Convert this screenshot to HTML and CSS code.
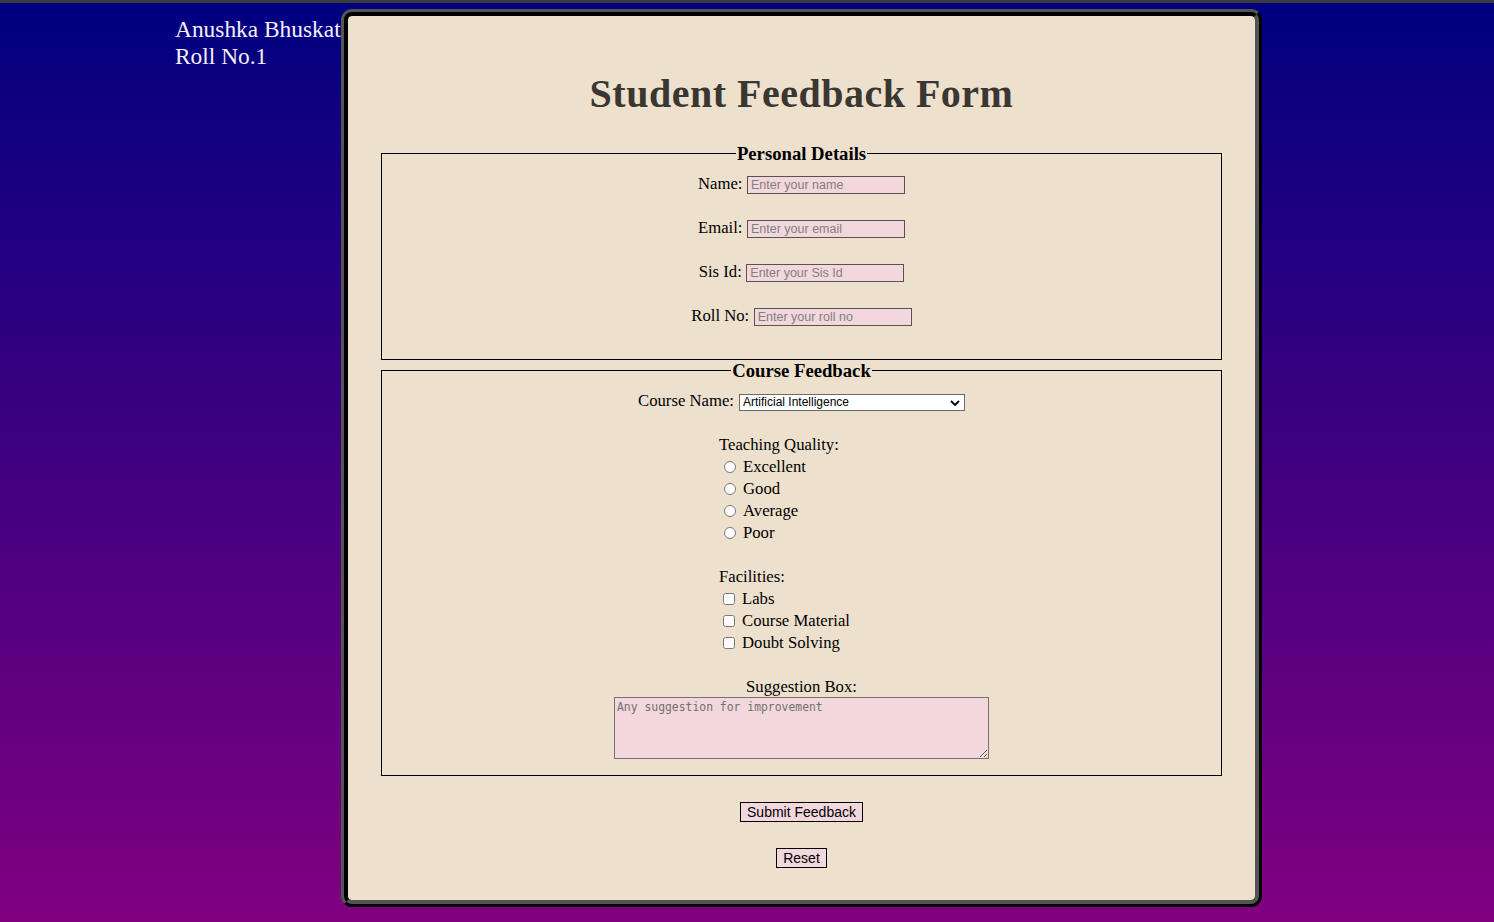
FILE: index.html
```html
<!DOCTYPE html>
<html lang="en">
<head>
<meta charset="utf-8">
<title>Student Feedback Form</title>
<link rel="stylesheet" href="styles.css">
</head>
<body>
<div class="page">
  <div class="student">Anushka Bhuskat<br>Roll No.1</div>
  <main class="card">
    <h1 class="title">Student Feedback Form</h1>
    <form class="form">
      <fieldset class="section">
        <legend class="legend">Personal Details</legend>
        <div class="row"><label class="label" for="name">Name:</label><input class="field" id="name" type="text" placeholder="Enter your name"></div>
        <div class="row"><label class="label" for="email">Email:</label><input class="field" id="email" type="email" placeholder="Enter your email"></div>
        <div class="row"><label class="label" for="sis">Sis Id:</label><input class="field" id="sis" type="text" placeholder="Enter your Sis Id"></div>
        <div class="row"><label class="label" for="roll">Roll No:</label><input class="field" id="roll" type="text" placeholder="Enter your roll no"></div>
      </fieldset>
      <fieldset class="section">
        <legend class="legend">Course Feedback</legend>
        <div class="row row-select"><label class="label" for="course">Course Name:</label><span class="select-wrap"><select class="select" id="course"><option>Artificial Intelligence</option><option>Machine Learning</option><option>Data Structures</option></select><svg class="chevron" width="10" height="6" viewBox="0 0 10 6" aria-hidden="true"><path d="M1 1 L5 5 L9 1" fill="none" stroke="#000" stroke-width="1.8"/></svg></span></div>
        <div class="group">
          <div class="group-title">Teaching Quality:</div>
          <div class="option"><input class="radio" type="radio" name="quality" id="q1"><label for="q1">Excellent</label></div>
          <div class="option"><input class="radio" type="radio" name="quality" id="q2"><label for="q2">Good</label></div>
          <div class="option"><input class="radio" type="radio" name="quality" id="q3"><label for="q3">Average</label></div>
          <div class="option"><input class="radio" type="radio" name="quality" id="q4"><label for="q4">Poor</label></div>
        </div>
        <div class="group">
          <div class="group-title">Facilities:</div>
          <div class="option"><input class="check" type="checkbox" id="f1"><label for="f1">Labs</label></div>
          <div class="option"><input class="check" type="checkbox" id="f2"><label for="f2">Course Material</label></div>
          <div class="option"><input class="check" type="checkbox" id="f3"><label for="f3">Doubt Solving</label></div>
        </div>
        <div class="suggest-label"><label for="sug">Suggestion Box:</label></div>
        <textarea class="suggest" id="sug" placeholder="Any suggestion for improvement"></textarea>
      </fieldset>
      <div class="actions">
        <button class="btn" type="submit">Submit Feedback</button>
        <button class="btn" type="reset">Reset</button>
      </div>
    </form>
  </main>
</div>
</body>
</html>
```

FILE: styles.css
```css
html {
  box-sizing: border-box;
  height: 100%;
  border-top: 3px solid #3c3c3c;
  background: linear-gradient(#000080, #800080);
}
*, *::before, *::after { box-sizing: inherit; }
body {
  margin: 0;
  font-family: "Liberation Serif", "Times New Roman", serif;
  color: #000;
}
.page {
  display: flex;
  align-items: flex-start;
  padding: 6px 0 0 175px;
}
.student {
  flex: 0 0 166px;
  margin-top: 7px;
  font-size: 23.4px;
  line-height: 26.5px;
  color: #f4f0ff;
  white-space: nowrap;
}
.card {
  flex: 0 0 921px;
  width: 921px;
  border: 7px ridge #000;
  border-radius: 11px;
  background: #ede1cd;
  padding: 26px 31px 32px;
}
.title {
  margin: 28px 0 26px;
  text-align: center;
  font-family: "Liberation Serif", Georgia, serif;
  font-weight: bold;
  font-size: 40px;
  letter-spacing: 0.5px;
  color: #3a3631;
}
.form { margin: 0; }
.section {
  margin: 0 2px;
  border: 1px solid #000;
  padding: 9px 12px 10px;
  text-align: center;
  font-size: 16.7px;
  line-height: 22px;
}
.legend {
  font-weight: bold;
  font-size: 18.7px;
  line-height: 21px;
  padding: 0 1px;
}
.row {
  display: flex;
  justify-content: center;
  align-items: center;
  gap: 4.5px;
  height: 22px;
  margin-bottom: 22px;
}
.row-select { gap: 5px; }
.label { line-height: 22px; }
.field {
  width: 158px;
  height: 18px;
  margin: 1px 0 0;
  border: 1px solid #5a5252;
  background: #f2d7dc;
  padding: 1px 3px;
  font-family: "Liberation Sans", Arial, sans-serif;
  font-size: 12.5px;
}
.field::placeholder { color: #838080; }
.select-wrap {
  position: relative;
  display: inline-flex;
  margin-top: 2px;
}
.select {
  appearance: none;
  -webkit-appearance: none;
  width: 226px;
  height: 17px;
  border: 1px solid #6a6a6a;
  border-radius: 0;
  background: #fff;
  padding: 0 0 0 3px;
  font-family: "Liberation Sans", Arial, sans-serif;
  font-size: 12px;
  line-height: 15px;
  color: #000;
  margin: 0;
}
.chevron {
  position: absolute;
  right: 5px;
  top: 6px;
  pointer-events: none;
}
.group {
  width: 165px;
  margin: 0 auto 22px;
  text-align: left;
}
.group-title { height: 22px; }
.option {
  display: flex;
  align-items: center;
  height: 22px;
  white-space: nowrap;
}
.radio {
  width: 12px;
  height: 12px;
  margin: 0 7px 0 5px;
}
.check {
  width: 12px;
  height: 12px;
  margin: 0 7px 0 4px;
}
.suggest-label { line-height: 21px; }
.suggest {
  display: block;
  width: 375px;
  height: 62px;
  margin: 0 auto 6px;
  border: 1px solid #7a7070;
  background: #f2d7dc;
  padding: 2px;
  font-family: "DejaVu Sans Mono", "Liberation Mono", monospace;
  font-size: 11.4px;
  resize: both;
}
.suggest::placeholder { color: #757070; }
.actions {
  display: flex;
  flex-direction: column;
  align-items: center;
  gap: 26px;
  margin-top: 26px;
}
.btn {
  height: 20px;
  padding: 0 6px;
  border: 1px solid #000;
  border-radius: 0;
  background: #f2d7dc;
  font-family: "Liberation Sans", Arial, sans-serif;
  font-size: 14px;
  line-height: 18px;
  color: #000;
  margin: 0;
}
```
